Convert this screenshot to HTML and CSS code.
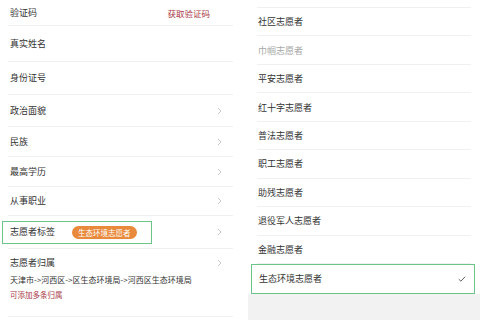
FILE: index.html
```html
<!DOCTYPE html>
<html lang="zh">
<head>
<meta charset="utf-8">
<link rel="stylesheet" href="styles.css">
</head>
<body>
<div class="screen">
  <section class="panel left">
    <div class="row h26"><span class="label">验证码</span><span class="getcode">获取验证码</span></div>
    <div class="row h36"><span class="label">真实姓名</span></div>
    <div class="row h33"><span class="label">身份证号</span></div>
    <div class="row h32"><span class="label">政治面貌</span><svg class="chev" viewBox="0 0 5 8"><polyline points="1,1 4,4 1,7"/></svg></div>
    <div class="row h30"><span class="label">民族</span><svg class="chev" viewBox="0 0 5 8"><polyline points="1,1 4,4 1,7"/></svg></div>
    <div class="row h30"><span class="label">最高学历</span><svg class="chev" viewBox="0 0 5 8"><polyline points="1,1 4,4 1,7"/></svg></div>
    <div class="row h29"><span class="label">从事职业</span><svg class="chev" viewBox="0 0 5 8"><polyline points="1,1 4,4 1,7"/></svg></div>
    <div class="row h33">
      <div class="hl-box"><span class="label">志愿者标签</span><span class="pill">生态环境志愿者</span></div>
      <svg class="chev" viewBox="0 0 5 8"><polyline points="1,1 4,4 1,7"/></svg>
    </div>
    <div class="row block">
      <div class="block-head"><span class="label">志愿者归属</span><svg class="chev" viewBox="0 0 5 8"><polyline points="1,1 4,4 1,7"/></svg></div>
      <div class="addr">天津市-&gt;河西区-&gt;区生态环境局-&gt;河西区生态环境局</div>
      <div class="note">可添加多条归属</div>
    </div>
  </section>
  <section class="panel right">
    <div class="list">
      <div class="lead"></div>
      <div class="item">社区志愿者</div>
      <div class="item muted">巾帼志愿者</div>
      <div class="item">平安志愿者</div>
      <div class="item">红十字志愿者</div>
      <div class="item">普法志愿者</div>
      <div class="item">职工志愿者</div>
      <div class="item">助残志愿者</div>
      <div class="item">退役军人志愿者</div>
      <div class="item">金融志愿者</div>
      <div class="item selected">生态环境志愿者<svg class="check" viewBox="0 0 9 7"><polyline points="0.8,3.8 3.2,6 8.2,0.8"/></svg></div>
    </div>
    <div class="tail"></div>
  </section>
</div>
</body>
</html>
```

FILE: styles.css
```css
html, body {
  margin: 0;
  padding: 0;
  background: #ffffff;
}
body {
  width: 480px;
  height: 320px;
  overflow: hidden;
  font-family: "Noto Sans CJK SC", "Noto Sans", sans-serif;
  color: #333333;
}
.screen {
  display: flex;
  width: 480px;
  height: 320px;
}
.panel {
  width: 240px;
  height: 320px;
}
.left {
  display: flex;
  flex-direction: column;
  width: 241px;
}
.row {
  box-sizing: border-box;
  margin: 0 8px;
  padding: 0 11px 0 2px;
  border-bottom: 1px solid #f0f0f0;
  display: flex;
  align-items: center;
  justify-content: space-between;
}
.h26 { height: 26px; }
.h36 { height: 36px; }
.h33 { height: 33px; }
.h32 { height: 32px; }
.h30 { height: 30px; }
.h29 { height: 29px; }
.label {
  font-size: 9px;
  line-height: 12px;
  color: #333333;
}
.getcode {
  font-size: 8.5px;
  color: #a83744;
  margin-right: 12px;
}
.chev {
  width: 5px;
  height: 8px;
  fill: none;
  stroke: #c2c2c2;
  stroke-width: 0.9;
}
.hl-box {
  box-sizing: border-box;
  margin-left: -8px;
  width: 150px;
  height: 23px;
  border: 1.5px solid #6cc48a;
  padding-left: 7px;
  display: flex;
  align-items: center;
}
.pill {
  margin-left: 17px;
  background: #e8893b;
  color: #ffffff;
  font-size: 7.5px;
  line-height: 13px;
  padding: 0 6px;
  border-radius: 7px;
  height: 13px;
}
.block {
  flex-direction: column;
  align-items: stretch;
  justify-content: flex-start;
  height: 68px;
  padding-top: 8px;
}
.block-head {
  display: flex;
  align-items: center;
  justify-content: space-between;
}
.addr {
  margin-top: 5px;
  font-size: 8px;
  line-height: 12px;
  color: #333333;
  white-space: nowrap;
}
.note {
  margin-top: 3px;
  font-size: 7.5px;
  line-height: 12px;
  color: #a83744;
}
.right {
  display: flex;
  flex-direction: column;
  padding-left: 7px;
  box-sizing: border-box;
  width: 239px;
}
.list {
  margin-left: 3px;
  width: 224px;
}
.lead {
  height: 7px;
  margin: 0 4px 0 6px;
  border-bottom: 1px solid #f0f0f0;
}
.item {
  box-sizing: border-box;
  height: 28.45px;
  margin: 0 4px 0 6px;
  padding-left: 1px;
  border-bottom: 1px solid #f0f0f0;
  display: flex;
  align-items: center;
  justify-content: space-between;
  font-size: 9px;
  color: #333333;
}
.item.muted {
  color: #a8a8a8;
}
.item.selected {
  margin: 0;
  height: 30px;
  padding: 0 8px 0 7px;
  border: 1.5px solid #6cc48a;
}
.check {
  width: 8px;
  height: 6px;
  fill: none;
  stroke: #444444;
  stroke-width: 1;
}
.tail {
  flex: 1;
  background: #f2f2f2;
}
```
